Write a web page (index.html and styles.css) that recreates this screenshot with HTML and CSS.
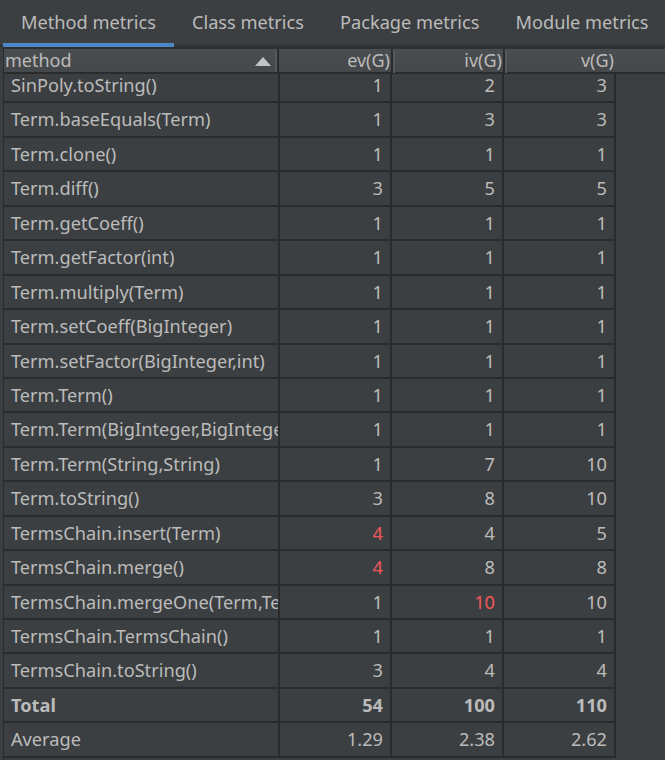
FILE: index.html
```html
<!DOCTYPE html>
<html>
<head>
<meta charset="utf-8">
<link rel="stylesheet" href="styles.css">
</head>
<body>
<div class="tabs">
  <div class="tab active">Method metrics</div>
  <div class="tab">Class metrics</div>
  <div class="tab">Package metrics</div>
  <div class="tab">Module metrics</div>
</div>
<div class="table">
  <div class="head">
    <div class="hcell hmethod"><span>method</span><svg class="sort" width="16" height="9" viewBox="0 0 16 9"><polygon points="8,0 16,9 0,9" fill="#c4c4c4"/></svg></div>
    <div class="hcell num sep">ev(G)</div>
    <div class="hcell num sep">iv(G)</div>
    <div class="hcell num last">v(G)</div>
  </div>
  <div class="body">
    <div class="row first"><div class="cell name">SinPoly.toString()</div><div class="cell num">1</div><div class="cell num">2</div><div class="cell num">3</div></div>
    <div class="row"><div class="cell name">Term.baseEquals(Term)</div><div class="cell num">1</div><div class="cell num">3</div><div class="cell num">3</div></div>
    <div class="row"><div class="cell name">Term.clone()</div><div class="cell num">1</div><div class="cell num">1</div><div class="cell num">1</div></div>
    <div class="row"><div class="cell name">Term.diff()</div><div class="cell num">3</div><div class="cell num">5</div><div class="cell num">5</div></div>
    <div class="row"><div class="cell name">Term.getCoeff()</div><div class="cell num">1</div><div class="cell num">1</div><div class="cell num">1</div></div>
    <div class="row"><div class="cell name">Term.getFactor(int)</div><div class="cell num">1</div><div class="cell num">1</div><div class="cell num">1</div></div>
    <div class="row"><div class="cell name">Term.multiply(Term)</div><div class="cell num">1</div><div class="cell num">1</div><div class="cell num">1</div></div>
    <div class="row"><div class="cell name">Term.setCoeff(BigInteger)</div><div class="cell num">1</div><div class="cell num">1</div><div class="cell num">1</div></div>
    <div class="row"><div class="cell name">Term.setFactor(BigInteger,int)</div><div class="cell num">1</div><div class="cell num">1</div><div class="cell num">1</div></div>
    <div class="row"><div class="cell name">Term.Term()</div><div class="cell num">1</div><div class="cell num">1</div><div class="cell num">1</div></div>
    <div class="row"><div class="cell name">Term.Term(BigInteger,BigInteger)</div><div class="cell num">1</div><div class="cell num">1</div><div class="cell num">1</div></div>
    <div class="row"><div class="cell name">Term.Term(String,String)</div><div class="cell num">1</div><div class="cell num">7</div><div class="cell num">10</div></div>
    <div class="row"><div class="cell name">Term.toString()</div><div class="cell num">3</div><div class="cell num">8</div><div class="cell num">10</div></div>
    <div class="row"><div class="cell name">TermsChain.insert(Term)</div><div class="cell num red">4</div><div class="cell num">4</div><div class="cell num">5</div></div>
    <div class="row"><div class="cell name">TermsChain.merge()</div><div class="cell num red">4</div><div class="cell num">8</div><div class="cell num">8</div></div>
    <div class="row"><div class="cell name">TermsChain.mergeOne(Term,Term)</div><div class="cell num">1</div><div class="cell num red">10</div><div class="cell num">10</div></div>
    <div class="row"><div class="cell name">TermsChain.TermsChain()</div><div class="cell num">1</div><div class="cell num">1</div><div class="cell num">1</div></div>
    <div class="row"><div class="cell name">TermsChain.toString()</div><div class="cell num">3</div><div class="cell num">4</div><div class="cell num">4</div></div>
    <div class="row total"><div class="cell name">Total</div><div class="cell num">54</div><div class="cell num">100</div><div class="cell num">110</div></div>
    <div class="row"><div class="cell name">Average</div><div class="cell num">1.29</div><div class="cell num">2.38</div><div class="cell num">2.62</div></div>
  </div>
</div>
</body>
</html>
```
FILE: styles.css
```css
html, body {
  margin: 0;
  padding: 0;
  background: #3c3f41;
  color: #bbbbbb;
  font-family: "Noto Sans", "Open Sans", sans-serif;
  width: 665px;
  height: 760px;
  overflow: hidden;
}

.tabs {
  display: flex;
  height: 45px;
  padding-left: 3px;
  border-bottom: 2px solid #313335;
  font-size: 18.2px;
}

.tab {
  position: relative;
  padding: 0 18px;
  line-height: 44px;
  white-space: nowrap;
}

.tab.active::after {
  content: "";
  position: absolute;
  left: 0;
  right: 0;
  bottom: -2px;
  height: 4px;
  background: #4a88c7;
}

.table {
  margin-left: 3px;
  border-left: 1px solid #2b2b2b;
}

.head {
  display: grid;
  grid-template-columns: 275px 112px 112px 1fr;
  height: 27px;
  box-sizing: border-box;
  border-top: 2px solid #2e3032;
  border-bottom: 2px solid #2b2b2b;
  background: linear-gradient(#4b4e51, #45484a);
  font-size: 18px;
  line-height: 23px;
}

.hcell {
  position: relative;
  white-space: nowrap;
}

.hmethod {
  display: flex;
  align-items: center;
  justify-content: space-between;
  padding-left: 1px;
  padding-right: 6px;
  border-right: 2px solid #2b2b2b;
  box-shadow: inset -2px 0 0 #56595c;
}

.hmethod .sort {
  margin-top: 1px;
}

.hcell.num {
  text-align: right;
}

.hcell.sep {
  padding-right: 1px;
}

.hcell.sep::after {
  content: "";
  position: absolute;
  top: 0;
  bottom: 0;
  right: -2px;
  width: 2px;
  background: #2b2b2b;
  box-shadow: 2px 1px 0 #56595c;
}

.hcell.last {
  width: 111px;
}

.body {
  height: 686px;
  overflow: hidden;
  font-size: 18.2px;
}

.row {
  display: grid;
  grid-template-columns: 276px 112px 112px 112px;
  width: 612px;
  height: 34.45px;
  box-sizing: border-box;
  border-bottom: 2px solid #2b2b2b;
}

.row.first {
  margin-top: -5px;
}

.cell {
  box-sizing: border-box;
  border-right: 2px solid #2b2b2b;
  line-height: 32px;
  white-space: nowrap;
  overflow: hidden;
}

.cell.name {
  padding-left: 7px;
}

.cell.num {
  text-align: right;
  padding-right: 7px;
}

.red {
  color: #f0595b;
}

.total .cell {
  font-weight: bold;
}
```
